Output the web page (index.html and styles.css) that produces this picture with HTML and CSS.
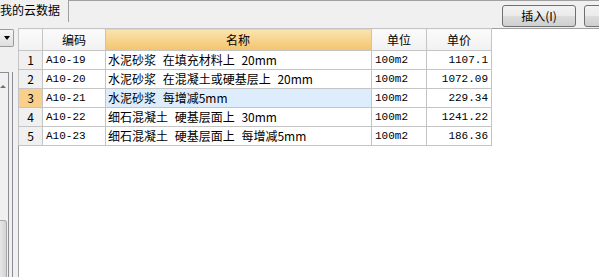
FILE: index.html
```html
<!DOCTYPE html>
<html lang="zh-CN">
<head>
    <meta charset="UTF-8">
    <title>我的云数据</title>
    <link rel="stylesheet" href="styles.css">
</head>
<body>
    <div class="tabbar">
        <div class="tab">我的云数据</div>
        <div class="tab-rest">
            <button class="btn">插入(I)</button>
            <button class="btn">替换(R)</button>
        </div>
    </div>

    <div class="main">
        <div class="side">
            <div class="combo-btn"><span class="arrow"></span></div>
            <div class="tree-outer">
                <div class="tree">
                    <span class="up"></span>
                    <div class="thumb"></div>
                </div>
            </div>
        </div>

        <div class="grid-wrap">
            <table class="grid">
                <thead>
                    <tr>
                        <th class="num"></th>
                        <th class="code">编码</th>
                        <th class="name sorted">名称</th>
                        <th class="unit">单位</th>
                        <th class="price">单价</th>
                    </tr>
                </thead>
                <tbody>
                    <tr>
                        <td class="num">1</td>
                        <td class="code">A10-19</td>
                        <td class="name">水泥砂浆 在填充材料上 20mm</td>
                        <td class="unit">100m2</td>
                        <td class="price">1107.1</td>
                    </tr>
                    <tr>
                        <td class="num">2</td>
                        <td class="code">A10-20</td>
                        <td class="name">水泥砂浆 在混凝土或硬基层上 20mm</td>
                        <td class="unit">100m2</td>
                        <td class="price">1072.09</td>
                    </tr>
                    <tr class="current">
                        <td class="num">3</td>
                        <td class="code">A10-21</td>
                        <td class="name">水泥砂浆 每增减5mm</td>
                        <td class="unit">100m2</td>
                        <td class="price">229.34</td>
                    </tr>
                    <tr>
                        <td class="num">4</td>
                        <td class="code">A10-22</td>
                        <td class="name">细石混凝土 硬基层面上 30mm</td>
                        <td class="unit">100m2</td>
                        <td class="price">1241.22</td>
                    </tr>
                    <tr>
                        <td class="num">5</td>
                        <td class="code">A10-23</td>
                        <td class="name">细石混凝土 硬基层面上 每增减5mm</td>
                        <td class="unit">100m2</td>
                        <td class="price">186.36</td>
                    </tr>
                </tbody>
            </table>
        </div>
    </div>
</body>
</html>
```

FILE: styles.css
```css
html, body {
    height: 100%;
}
body {
    margin: 0;
    background: #fff;
    font-family: "Noto Sans CJK SC", "DejaVu Sans", sans-serif;
    font-size: 12px;
    color: #000;
    display: flex;
    flex-direction: column;
    overflow: hidden;
}
.tabbar {
    display: flex;
    height: 28px;
    background: #f0f0f0;
    flex-shrink: 0;
}
.tab {
    width: 68px;
    height: 22px;
    line-height: 20px;
    font-size: 12px;
    border-right: 1px solid #a0a0a0;
    white-space: nowrap;
}
.tab-rest {
    flex: 1;
    border-top: 1px solid #a0a0a0;
    display: flex;
    justify-content: flex-end;
    align-items: flex-start;
    gap: 8px;
    padding-top: 4px;
    overflow: hidden;
    margin-right: -59px;
}
.btn {
    width: 74px;
    height: 22px;
    padding: 0;
    border: 1px solid #707070;
    border-radius: 3px;
    background: linear-gradient(#f2f2f2, #ebebeb 50%, #dddddd 51%, #cfcfcf);
    font-family: "Noto Sans CJK SC", sans-serif;
    font-size: 12px;
    color: #000;
    line-height: 18px;
}
.main {
    flex: 1;
    display: flex;
    min-height: 0;
}
.side {
    width: 18px;
    background: #f0f0f0;
    display: flex;
    flex-direction: column;
    flex-shrink: 0;
}
.combo-btn {
    width: 13px;
    height: 16px;
    margin-top: 1px;
    border: 1px solid #9a9a9a;
    border-left: none;
    border-radius: 0 2px 2px 0;
    background: linear-gradient(#f6f6f6, #dedede);
    display: flex;
    align-items: center;
    justify-content: center;
}
.arrow {
    width: 0;
    height: 0;
    border-left: 3px solid transparent;
    border-right: 3px solid transparent;
    border-top: 4px solid #000;
}
.tree-outer {
    flex: 1;
    width: 12px;
    margin-top: 25px;
    border-right: 1px solid #8c8c94;
}
.tree {
    position: relative;
    width: 9px;
    height: 100%;
    border-top: 1px solid #8c8c94;
    border-right: 1px solid #8c8c94;
    box-sizing: border-box;
}
.up {
    position: absolute;
    left: 0;
    top: 12px;
    width: 0;
    height: 0;
    border-left: 3px solid transparent;
    border-right: 3px solid transparent;
    border-bottom: 3px solid #707070;
}
.thumb {
    position: absolute;
    left: 0;
    right: 1px;
    top: 147px;
    bottom: -4px;
    border: 1px solid #a8a8a8;
    border-left: none;
    border-radius: 0 3px 0 0;
    background: linear-gradient(90deg, #e6e6e6, #d4d4d4);
}
.grid-wrap {
    flex: 1;
    border-left: 1px solid #a0a0a0;
    border-top: 1px solid #a0a0a0;
    background: #fff;
}
.grid {
    border-collapse: collapse;
    table-layout: fixed;
    margin-left: -1px;
    margin-top: -1px;
}
.grid th, .grid td {
    border: 1px solid #c4c4c4;
    padding: 0 3px;
    white-space: nowrap;
    overflow: hidden;
}
.grid th {
    height: 21px;
    font-weight: normal;
    font-size: 12px;
    background: linear-gradient(#fbfbfb, #f1f1f1);
    text-align: center;
}
.grid th.sorted {
    background: linear-gradient(#fbe4b0, #f3c46c);
}
.grid td {
    height: 18px;
    line-height: 18px;
}
.grid .num {
    width: 17px;
    text-align: center;
    background: #f0f0f0;
}
.grid th.num {
    background: linear-gradient(#fbfbfb, #f1f1f1);
}
.grid .code {
    width: 56px;
}
.grid .name {
    width: 260px;
    padding-left: 2px;
}
.grid td.name {
    word-spacing: 4px;
}
.grid .unit {
    width: 48px;
}
.grid .price {
    width: 58px;
}
.grid td.code, .grid td.unit, .grid td.price {
    font-family: "Liberation Mono", monospace;
    font-size: 11px;
}
.grid td.price {
    text-align: right;
}
.grid tr.current td.num {
    background: #f8d08c;
}
.grid tr.current td.name {
    background: #deedfc;
}
```
